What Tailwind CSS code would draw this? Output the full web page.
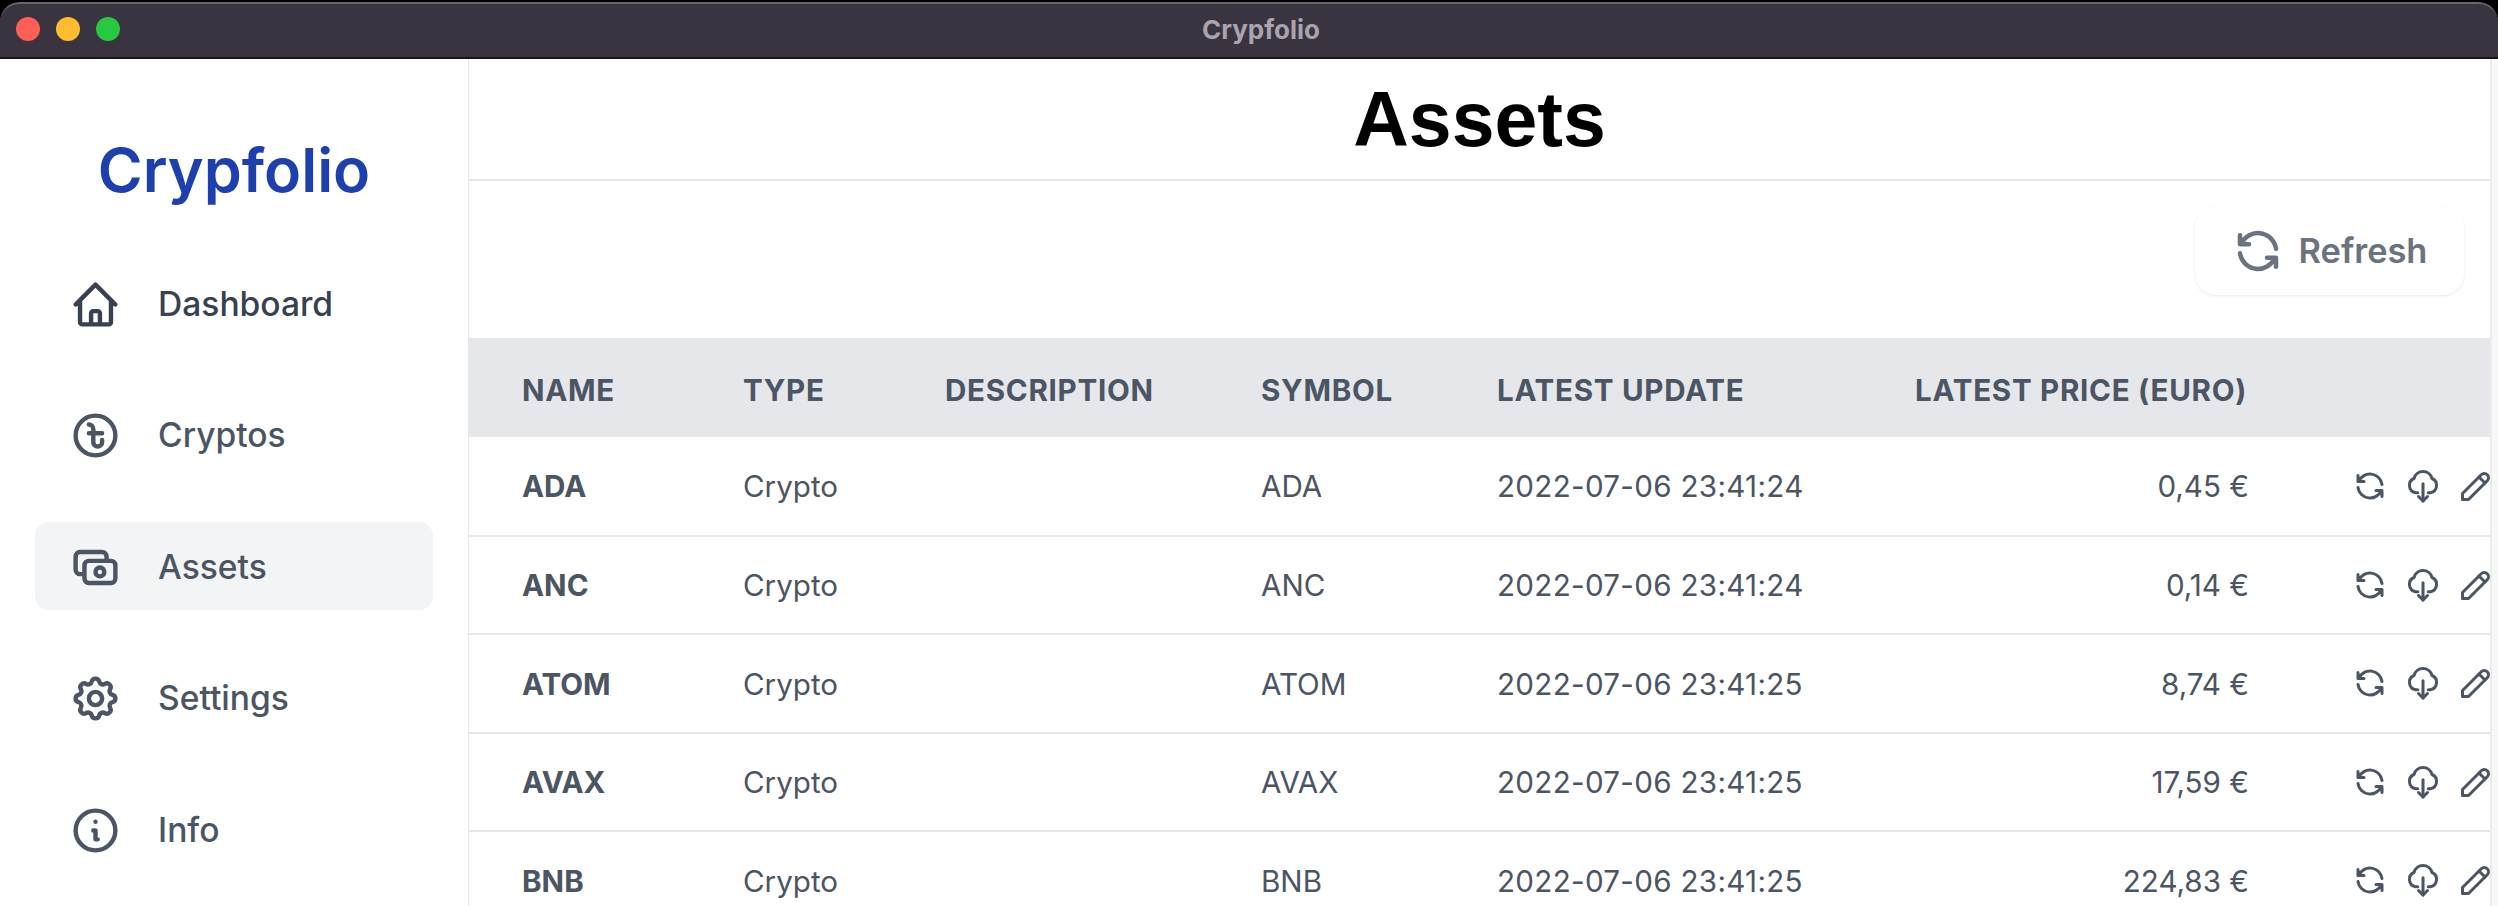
<!DOCTYPE html>
<html lang="en">
  <head>
    <meta charset="utf-8" />
    <title>Crypfolio - Assets</title>
    <script src="https://cdn.jsdelivr.net/npm/@tailwindcss/browser@4"></script>
  </head>
  <body class="bg-black font-['Inter',sans-serif]">
    <div class="h-[906px] w-[2498px] overflow-hidden flex flex-col pt-[2px]">
      <!-- title bar -->
      <div class="h-[57px] shrink-0 relative flex items-center justify-center bg-[#3a3440] rounded-t-[20px] border-t-2 border-t-[#6a666e] border-b-2 border-b-[#16141a]">
        <div class="absolute left-4 top-[13px] flex gap-4">
          <span class="w-6 h-6 rounded-full bg-[#ff5f57]"></span>
          <span class="w-6 h-6 rounded-full bg-[#febc2e]"></span>
          <span class="w-6 h-6 rounded-full bg-[#28c840]"></span>
        </div>
        <span class="text-[26px] font-bold text-[#aaa3b0] pl-[24px] pb-[2px]">Crypfolio</span>
      </div>

      <div class="flex-1 flex min-h-0 bg-white">
        <!-- sidebar -->
        <aside class="w-[469px] shrink-0 border-r-[1.5px] border-[#e5e7eb] pl-[35px] pr-[35px]">
          <div class="h-[200px] flex items-center justify-center pt-[23px] text-[61px] font-semibold text-[#1e40af]">Crypfolio</div>
          <nav class="flex flex-col gap-[43.5px] text-[33.6px] font-medium text-[#4b5563]">
            <a class="h-[88px] pt-[2px] flex items-center gap-[36px] pl-[34px] rounded-[14px] text-[#374151]">
              <svg class="w-[53px] h-[53px]" fill="none" viewBox="0 0 24 24" stroke="currentColor" stroke-width="2" stroke-linecap="round" stroke-linejoin="round"><path d="M3 12l2-2m0 0l7-7 7 7M5 10v10a1 1 0 001 1h3m10-11l2 2m-2-2v10a1 1 0 01-1 1h-3m-6 0a1 1 0 001-1v-4a1 1 0 011-1h2a1 1 0 011 1v4a1 1 0 001 1m-6 0h6" /></svg>
              Dashboard
            </a>
            <a class="h-[88px] pt-[2px] flex items-center gap-[36px] pl-[34px] rounded-[14px]">
              <svg class="w-[53px] h-[53px]" fill="none" viewBox="0 0 24 24" stroke="currentColor" stroke-width="2" stroke-linecap="round" stroke-linejoin="round"><path d="M11 11V9a2 2 0 00-2-2m2 4v4a2 2 0 104 0v-1m-4-3H9m2 0h4m6 1a9 9 0 11-18 0 9 9 0 0118 0z" /></svg>
              Cryptos
            </a>
            <a class="h-[88px] pt-[2px] flex items-center gap-[36px] pl-[34px] rounded-[14px] bg-[#f3f4f6]">
              <svg class="w-[53px] h-[53px]" fill="none" viewBox="0 0 24 24" stroke="currentColor" stroke-width="2" stroke-linecap="round" stroke-linejoin="round"><path d="M17 9V7a2 2 0 00-2-2H5a2 2 0 00-2 2v6a2 2 0 002 2h2m2 4h10a2 2 0 002-2v-6a2 2 0 00-2-2H9a2 2 0 00-2 2v6a2 2 0 002 2zm7-5a2 2 0 11-4 0 2 2 0 014 0z" /></svg>
              Assets
            </a>
            <a class="h-[88px] pt-[2px] flex items-center gap-[36px] pl-[34px] rounded-[14px]">
              <svg class="w-[53px] h-[53px]" fill="none" viewBox="0 0 24 24" stroke="currentColor" stroke-width="2" stroke-linecap="round" stroke-linejoin="round"><path d="M10.325 4.317c.426-1.756 2.924-1.756 3.35 0a1.724 1.724 0 002.573 1.066c1.543-.94 3.31.826 2.37 2.37a1.724 1.724 0 001.065 2.572c1.756.426 1.756 2.924 0 3.35a1.724 1.724 0 00-1.066 2.573c.94 1.543-.826 3.31-2.37 2.37a1.724 1.724 0 00-2.572 1.065c-.426 1.756-2.924 1.756-3.35 0a1.724 1.724 0 00-2.573-1.066c-1.543.94-3.31-.826-2.37-2.37a1.724 1.724 0 00-1.065-2.572c-1.756-.426-1.756-2.924 0-3.35a1.724 1.724 0 001.066-2.573c-.94-1.543.826-3.31 2.37-2.37.996.608 2.296.07 2.572-1.065z" /><path d="M15 12a3 3 0 11-6 0 3 3 0 016 0z" /></svg>
              Settings
            </a>
            <a class="h-[88px] pt-[2px] flex items-center gap-[36px] pl-[34px] rounded-[14px]">
              <svg class="w-[53px] h-[53px]" fill="none" viewBox="0 0 24 24" stroke="currentColor" stroke-width="2" stroke-linecap="round" stroke-linejoin="round"><path d="M13 16h-1v-4h-1m1-4h.01M21 12a9 9 0 11-18 0 9 9 0 0118 0z" /></svg>
              Info
            </a>
          </nav>
        </aside>

        <!-- main -->
        <main class="flex-1 min-w-0 flex">
          <div class="w-[2021px] shrink-0 overflow-hidden">
            <header class="h-[122px] pt-[14px] border-b-2 border-[#e5e7eb] flex items-start justify-center">
              <h1 class="text-[77px] leading-[92px] font-bold text-black font-['Liberation_Sans',sans-serif]">Assets</h1>
            </header>
            <div class="h-[157px] pt-[26px] flex items-start justify-end pr-[26px]">
              <button class="w-[269px] h-[88px] flex items-center justify-center gap-[14px] pr-[1px] rounded-[21px] bg-white shadow-[0_1px_3px_rgba(0,0,0,0.09)] text-[34.4px] font-semibold text-[#6b7280]">
                <svg class="w-[54px] h-[54px]" fill="none" viewBox="0 0 24 24" stroke="currentColor" stroke-width="2" stroke-linecap="round" stroke-linejoin="round"><path d="M20 11a8.1 8.1 0 0 0 -15.5 -2m-.5 -4v4h4" /><path d="M4 13a8.1 8.1 0 0 0 15.5 2m.5 4v-4h-4" /></svg>
                Refresh
              </button>
            </div>
            <table class="w-[2021px] table-fixed text-[29.6px] text-[#4b5563]">
              <colgroup>
                <col class="w-[222px]" /><col class="w-[202px]" /><col class="w-[316px]" /><col class="w-[236px]" /><col class="w-[401px]" /><col class="w-[453px]" /><col class="w-[191px]" />
              </colgroup>
              <thead class="bg-[#e5e7eb] text-left uppercase tracking-[0.7px]">
                <tr class="h-[99px]">
                  <th class="pl-[53px] pt-[5px] font-bold">Name</th>
                  <th class="pl-[52px] pt-[5px] font-bold">Type</th>
                  <th class="pl-[52px] pt-[5px] font-bold">Description</th>
                  <th class="pl-[52px] pt-[5px] font-bold">Symbol</th>
                  <th class="pl-[52px] pt-[5px] font-bold">Latest update</th>
                  <th class="pr-[52px] pt-[5px] font-bold text-right whitespace-nowrap">Latest price (euro)</th>
                  <th></th>
                </tr>
              </thead>
              <tbody>
                <tr class="h-[98.5px] border-b-2 border-[#e5e7eb]">
                  <td class="pl-[53px] pt-[1px] font-bold">ADA</td><td class="pl-[52px] pt-[1px]">Crypto</td><td></td><td class="pl-[52px] pt-[1px]">ADA</td>
                  <td class="pl-[52px] pt-[1px] tracking-[0.3px] whitespace-nowrap">2022-07-06 23:41:24</td><td class="pr-[50px] pt-[1px] text-right">0,45 €</td>
                  <td>
                    <div class="flex gap-[17px] pl-[53px]">
                      <svg class="w-[36px] h-[36px] shrink-0" fill="none" viewBox="0 0 24 24" stroke="currentColor" stroke-width="2" stroke-linecap="round" stroke-linejoin="round"><path d="M20 11a8.1 8.1 0 0 0 -15.5 -2m-.5 -4v4h4" /><path d="M4 13a8.1 8.1 0 0 0 15.5 2m.5 4v-4h-4" /></svg>
                      <svg class="w-[36px] h-[36px] shrink-0" fill="none" viewBox="0 0 24 24" stroke="currentColor" stroke-width="2" stroke-linecap="round" stroke-linejoin="round"><path d="M8.5 16.5H7a5 5 0 0 1 -1 -9.5a6.2 6.2 0 0 1 12 0a5 5 0 0 1 -1 9.5h-1.5" /><path d="M12 10.5v11.5" /><path d="M9 19l3 3l3 -3" /></svg>
                      <svg class="w-[36px] h-[36px] shrink-0" fill="none" viewBox="0 0 24 24" stroke="currentColor" stroke-width="2" stroke-linecap="round" stroke-linejoin="round"><path d="M3 21h4l12.5 -12.5a2.4 2.4 0 1 0 -4 -4l-12.5 12.5v4" /><path d="M14 6l4 4" /></svg>
                    </div>
                  </td>
                </tr>
                <tr class="h-[98.5px] border-b-2 border-[#e5e7eb]">
                  <td class="pl-[53px] pt-[1px] font-bold">ANC</td><td class="pl-[52px] pt-[1px]">Crypto</td><td></td><td class="pl-[52px] pt-[1px]">ANC</td>
                  <td class="pl-[52px] pt-[1px] tracking-[0.3px] whitespace-nowrap">2022-07-06 23:41:24</td><td class="pr-[50px] pt-[1px] text-right">0,14 €</td>
                  <td>
                    <div class="flex gap-[17px] pl-[53px]">
                      <svg class="w-[36px] h-[36px] shrink-0" fill="none" viewBox="0 0 24 24" stroke="currentColor" stroke-width="2" stroke-linecap="round" stroke-linejoin="round"><path d="M20 11a8.1 8.1 0 0 0 -15.5 -2m-.5 -4v4h4" /><path d="M4 13a8.1 8.1 0 0 0 15.5 2m.5 4v-4h-4" /></svg>
                      <svg class="w-[36px] h-[36px] shrink-0" fill="none" viewBox="0 0 24 24" stroke="currentColor" stroke-width="2" stroke-linecap="round" stroke-linejoin="round"><path d="M8.5 16.5H7a5 5 0 0 1 -1 -9.5a6.2 6.2 0 0 1 12 0a5 5 0 0 1 -1 9.5h-1.5" /><path d="M12 10.5v11.5" /><path d="M9 19l3 3l3 -3" /></svg>
                      <svg class="w-[36px] h-[36px] shrink-0" fill="none" viewBox="0 0 24 24" stroke="currentColor" stroke-width="2" stroke-linecap="round" stroke-linejoin="round"><path d="M3 21h4l12.5 -12.5a2.4 2.4 0 1 0 -4 -4l-12.5 12.5v4" /><path d="M14 6l4 4" /></svg>
                    </div>
                  </td>
                </tr>
                <tr class="h-[98.5px] border-b-2 border-[#e5e7eb]">
                  <td class="pl-[53px] pt-[1px] font-bold">ATOM</td><td class="pl-[52px] pt-[1px]">Crypto</td><td></td><td class="pl-[52px] pt-[1px]">ATOM</td>
                  <td class="pl-[52px] pt-[1px] tracking-[0.3px] whitespace-nowrap">2022-07-06 23:41:25</td><td class="pr-[50px] pt-[1px] text-right">8,74 €</td>
                  <td>
                    <div class="flex gap-[17px] pl-[53px]">
                      <svg class="w-[36px] h-[36px] shrink-0" fill="none" viewBox="0 0 24 24" stroke="currentColor" stroke-width="2" stroke-linecap="round" stroke-linejoin="round"><path d="M20 11a8.1 8.1 0 0 0 -15.5 -2m-.5 -4v4h4" /><path d="M4 13a8.1 8.1 0 0 0 15.5 2m.5 4v-4h-4" /></svg>
                      <svg class="w-[36px] h-[36px] shrink-0" fill="none" viewBox="0 0 24 24" stroke="currentColor" stroke-width="2" stroke-linecap="round" stroke-linejoin="round"><path d="M8.5 16.5H7a5 5 0 0 1 -1 -9.5a6.2 6.2 0 0 1 12 0a5 5 0 0 1 -1 9.5h-1.5" /><path d="M12 10.5v11.5" /><path d="M9 19l3 3l3 -3" /></svg>
                      <svg class="w-[36px] h-[36px] shrink-0" fill="none" viewBox="0 0 24 24" stroke="currentColor" stroke-width="2" stroke-linecap="round" stroke-linejoin="round"><path d="M3 21h4l12.5 -12.5a2.4 2.4 0 1 0 -4 -4l-12.5 12.5v4" /><path d="M14 6l4 4" /></svg>
                    </div>
                  </td>
                </tr>
                <tr class="h-[98.5px] border-b-2 border-[#e5e7eb]">
                  <td class="pl-[53px] pt-[1px] font-bold">AVAX</td><td class="pl-[52px] pt-[1px]">Crypto</td><td></td><td class="pl-[52px] pt-[1px]">AVAX</td>
                  <td class="pl-[52px] pt-[1px] tracking-[0.3px] whitespace-nowrap">2022-07-06 23:41:25</td><td class="pr-[50px] pt-[1px] text-right">17,59 €</td>
                  <td>
                    <div class="flex gap-[17px] pl-[53px]">
                      <svg class="w-[36px] h-[36px] shrink-0" fill="none" viewBox="0 0 24 24" stroke="currentColor" stroke-width="2" stroke-linecap="round" stroke-linejoin="round"><path d="M20 11a8.1 8.1 0 0 0 -15.5 -2m-.5 -4v4h4" /><path d="M4 13a8.1 8.1 0 0 0 15.5 2m.5 4v-4h-4" /></svg>
                      <svg class="w-[36px] h-[36px] shrink-0" fill="none" viewBox="0 0 24 24" stroke="currentColor" stroke-width="2" stroke-linecap="round" stroke-linejoin="round"><path d="M8.5 16.5H7a5 5 0 0 1 -1 -9.5a6.2 6.2 0 0 1 12 0a5 5 0 0 1 -1 9.5h-1.5" /><path d="M12 10.5v11.5" /><path d="M9 19l3 3l3 -3" /></svg>
                      <svg class="w-[36px] h-[36px] shrink-0" fill="none" viewBox="0 0 24 24" stroke="currentColor" stroke-width="2" stroke-linecap="round" stroke-linejoin="round"><path d="M3 21h4l12.5 -12.5a2.4 2.4 0 1 0 -4 -4l-12.5 12.5v4" /><path d="M14 6l4 4" /></svg>
                    </div>
                  </td>
                </tr>
                <tr class="h-[98.5px] border-b-2 border-[#e5e7eb]">
                  <td class="pl-[53px] pt-[1px] font-bold">BNB</td><td class="pl-[52px] pt-[1px]">Crypto</td><td></td><td class="pl-[52px] pt-[1px]">BNB</td>
                  <td class="pl-[52px] pt-[1px] tracking-[0.3px] whitespace-nowrap">2022-07-06 23:41:25</td><td class="pr-[50px] pt-[1px] text-right">224,83 €</td>
                  <td>
                    <div class="flex gap-[17px] pl-[53px]">
                      <svg class="w-[36px] h-[36px] shrink-0" fill="none" viewBox="0 0 24 24" stroke="currentColor" stroke-width="2" stroke-linecap="round" stroke-linejoin="round"><path d="M20 11a8.1 8.1 0 0 0 -15.5 -2m-.5 -4v4h4" /><path d="M4 13a8.1 8.1 0 0 0 15.5 2m.5 4v-4h-4" /></svg>
                      <svg class="w-[36px] h-[36px] shrink-0" fill="none" viewBox="0 0 24 24" stroke="currentColor" stroke-width="2" stroke-linecap="round" stroke-linejoin="round"><path d="M8.5 16.5H7a5 5 0 0 1 -1 -9.5a6.2 6.2 0 0 1 12 0a5 5 0 0 1 -1 9.5h-1.5" /><path d="M12 10.5v11.5" /><path d="M9 19l3 3l3 -3" /></svg>
                      <svg class="w-[36px] h-[36px] shrink-0" fill="none" viewBox="0 0 24 24" stroke="currentColor" stroke-width="2" stroke-linecap="round" stroke-linejoin="round"><path d="M3 21h4l12.5 -12.5a2.4 2.4 0 1 0 -4 -4l-12.5 12.5v4" /><path d="M14 6l4 4" /></svg>
                    </div>
                  </td>
                </tr>
              </tbody>
            </table>
          </div>
          <div class="flex-1 bg-[#f8f8f8] border-l-2 border-[#ececec]"></div>
        </main>
      </div>
    </div>
  </body>
</html>
